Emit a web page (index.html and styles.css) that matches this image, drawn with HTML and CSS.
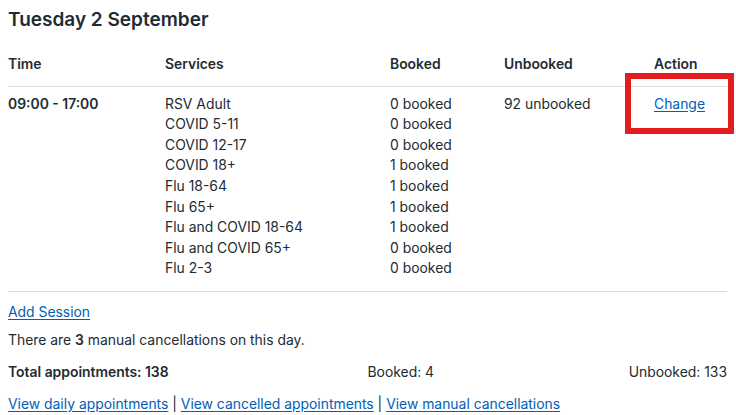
FILE: index.html
```html
<!DOCTYPE html>
<html lang="en">
<head>
<meta charset="utf-8">
<link rel="stylesheet" href="styles.css">
</head>
<body>
<div class="page">
  <h2 class="title">Tuesday 2 September</h2>
  <table class="sessions">
    <colgroup>
      <col class="c-time"><col class="c-services"><col class="c-booked"><col class="c-unbooked"><col class="c-action">
    </colgroup>
    <thead>
      <tr><th>Time</th><th>Services</th><th>Booked</th><th>Unbooked</th><th>Action</th></tr>
    </thead>
    <tbody>
      <tr>
        <td class="time">09:00 - 17:00</td>
        <td>
          <div>RSV Adult</div>
          <div>COVID 5-11</div>
          <div>COVID 12-17</div>
          <div>COVID 18+</div>
          <div>Flu 18-64</div>
          <div>Flu 65+</div>
          <div>Flu and COVID 18-64</div>
          <div>Flu and COVID 65+</div>
          <div>Flu 2-3</div>
        </td>
        <td>
          <div>0 booked</div>
          <div>0 booked</div>
          <div>0 booked</div>
          <div>1 booked</div>
          <div>1 booked</div>
          <div>1 booked</div>
          <div>1 booked</div>
          <div>0 booked</div>
          <div>0 booked</div>
        </td>
        <td>92 unbooked</td>
        <td class="action"><a href="#" class="link">Change</a><span class="highlight"></span></td>
      </tr>
    </tbody>
  </table>
  <p class="add"><a href="#" class="link">Add Session</a></p>
  <p class="note">There are <strong>3</strong> manual cancellations on this day.</p>
  <div class="totals">
    <strong>Total appointments: 138</strong>
    <div class="totals-right"><span>Booked: 4</span><span>Unbooked: 133</span></div>
  </div>
  <p class="links"><a href="#" class="link">View daily appointments</a> | <a href="#" class="link">View cancelled appointments</a> | <a href="#" class="link">View manual cancellations</a></p>
</div>
</body>
</html>
```

FILE: styles.css
```css
* { box-sizing: border-box; }
html, body { margin: 0; padding: 0; background: #ffffff; }
body {
  font-family: Inter, "Noto Sans", sans-serif;
  color: #212b32;
  font-size: 13.9px;
  line-height: 20.6px;
}
.page { padding: 0 9px 0 8px; }
.title {
  margin: 0;
  padding-top: 7px;
  font-size: 19px;
  line-height: 26px;
  font-weight: 600;
}
.sessions {
  width: 100%;
  border-collapse: collapse;
  table-layout: fixed;
  margin-top: 21px;
}
.c-time { width: 157px; }
.c-services { width: 225px; }
.c-booked { width: 114px; }
.c-unbooked { width: 150px; }
.c-action { width: auto; }
.sessions th {
  text-align: left;
  font-weight: 600;
  padding: 0 0 11px 0;
  border-bottom: 1px solid #d8dde0;
}
.sessions td {
  vertical-align: top;
  padding: 7px 0 12px 0;
  border-bottom: 1px solid #d8dde0;
}
.sessions td.time { font-weight: 600; }
.action { position: relative; }
.highlight {
  position: absolute;
  left: -29px;
  top: -14px;
  width: 109px;
  height: 61px;
  border: 6px solid #e41b1f;
}
.link { color: #005eb8; text-decoration: underline; text-underline-offset: 2px; }
.add { margin: 10px 0 0 0; }
.note { margin: 7px 0 0 0; }
.totals {
  display: grid;
  grid-template-columns: 1fr 1fr;
  margin-top: 12px;
}
.totals strong { font-weight: 600; }
.totals-right { display: flex; justify-content: space-between; }
.note strong { font-weight: 600; }
.links { margin: 11px 0 0 0; }
```
